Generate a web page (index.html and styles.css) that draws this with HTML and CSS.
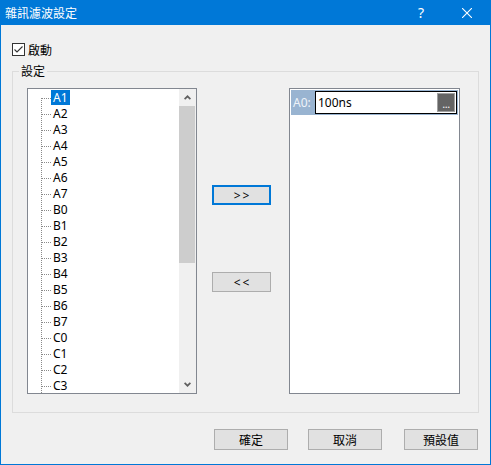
FILE: index.html
```html
<!DOCTYPE html>
<html lang="zh-Hant">
<head>
<meta charset="utf-8">
<title>雜訊濾波設定</title>
<link rel="stylesheet" href="styles.css">
</head>
<body>
<div class="window">
  <div class="titlebar">
    <span class="title">雜訊濾波設定</span>
    <span class="tb-btn help">?</span>
    <span class="tb-btn close"><svg width="10" height="10" viewBox="0 0 10 10"><path d="M0 0L10 10M10 0L0 10" stroke="#fff" stroke-width="1.1" fill="none"/></svg></span>
  </div>
  <div class="content">
    <div class="check-row">
      <span class="checkbox"><svg width="11" height="11" viewBox="0 0 11 11"><path d="M1.5 5.5L4 8L9.5 2.5" stroke="#333" stroke-width="1.1" fill="none"/></svg></span>
      <span class="check-label">啟動</span>
    </div>
    <fieldset class="group">
      <legend class="group-label">設定</legend>
      <div class="group-inner">
        <div class="tree">
          <div class="tree-items">
            <div class="row first"><span class="item selected">A1</span></div>
            <div class="row"><span class="item">A2</span></div>
            <div class="row"><span class="item">A3</span></div>
            <div class="row"><span class="item">A4</span></div>
            <div class="row"><span class="item">A5</span></div>
            <div class="row"><span class="item">A6</span></div>
            <div class="row"><span class="item">A7</span></div>
            <div class="row"><span class="item">B0</span></div>
            <div class="row"><span class="item">B1</span></div>
            <div class="row"><span class="item">B2</span></div>
            <div class="row"><span class="item">B3</span></div>
            <div class="row"><span class="item">B4</span></div>
            <div class="row"><span class="item">B5</span></div>
            <div class="row"><span class="item">B6</span></div>
            <div class="row"><span class="item">B7</span></div>
            <div class="row"><span class="item">C0</span></div>
            <div class="row"><span class="item">C1</span></div>
            <div class="row"><span class="item">C2</span></div>
            <div class="row"><span class="item">C3</span></div>
          </div>
          <div class="scrollbar">
            <div class="sb-btn"><svg width="7" height="5" viewBox="0 0 7 5"><path d="M0.6 4.2L3.5 1.3L6.4 4.2" stroke="#606060" stroke-width="1.7" fill="none"/></svg></div>
            <div class="sb-thumb"></div>
            <div class="sb-track"></div>
            <div class="sb-btn"><svg width="7" height="5" viewBox="0 0 7 5"><path d="M0.6 0.8L3.5 3.7L6.4 0.8" stroke="#606060" stroke-width="1.7" fill="none"/></svg></div>
          </div>
        </div>
        <div class="move-btns">
          <button class="btn move default">&gt;&gt;</button>
          <button class="btn move">&lt;&lt;</button>
        </div>
        <div class="panel">
          <div class="entry">
            <span class="entry-label">A0:</span>
            <div class="edit">
              <span class="edit-text">100ns</span>
              <span class="dots">...</span>
            </div>
          </div>
        </div>
      </div>
    </fieldset>
    <div class="footer">
      <button class="btn action">確定</button>
      <button class="btn action gap1">取消</button>
      <button class="btn action gap2">預設值</button>
    </div>
  </div>
</div>
</body>
</html>
```

FILE: styles.css
```css
* { box-sizing: border-box; }
html, body { margin: 0; padding: 0; }
body {
  font-family: "Noto Sans", "Noto Sans CJK TC", sans-serif;
  font-size: 12px;
  color: #000;
  background: #f0f0f0;
}
.window {
  width: 491px;
  height: 465px;
  border: 1px solid #0078d7;
  background: #f0f0f0;
  display: flex;
  flex-direction: column;
}
.titlebar {
  height: 24px;
  background: #0078d7;
  color: #fff;
  display: flex;
  align-items: center;
}
.title {
  flex: 1;
  padding-left: 4px;
  font-family: "Noto Sans CJK TC", sans-serif;
  font-size: 12px;
  line-height: 14px;
}
.tb-btn {
  width: 46px;
  height: 24px;
  display: flex;
  align-items: center;
  justify-content: center;
}
.help {
  font-family: "Noto Sans", sans-serif;
  font-size: 14px;
  padding-bottom: 1px;
}
.content {
  padding: 18px 11px 0 11px;
}
.check-row {
  display: flex;
  align-items: center;
  height: 13px;
}
.checkbox {
  width: 13px;
  height: 13px;
  border: 1px solid #333;
  background: #fff;
  display: flex;
}
.check-label {
  margin-left: 3px;
  font-family: "Noto Sans CJK TC", sans-serif;
  line-height: 13px;
}
.group {
  margin: 8px 0 0 0;
  padding: 0;
  border: 1px solid #dcdcdc;
  min-width: 0;
}
.group-label {
  margin-left: 6px;
  padding: 0 2px;
  font-family: "Noto Sans CJK TC", sans-serif;
  font-size: 12px;
  line-height: 14px;
}
.group-inner {
  display: flex;
  align-items: flex-start;
  padding: 10px 18px 18px 14px;
}
.tree {
  width: 170px;
  height: 306px;
  border: 1px solid #828790;
  background: #fff;
  display: flex;
}
.tree-items {
  flex: 1;
  overflow: hidden;
  padding-top: 1px;
}
.row {
  height: 16px;
  display: flex;
  align-items: flex-start;
  padding-left: 23px;
  background-image:
    repeating-linear-gradient(to bottom, #8a8a8a 0 1px, transparent 1px 2px),
    repeating-linear-gradient(to right, #8a8a8a 0 1px, transparent 1px 2px);
  background-repeat: no-repeat;
  background-position: 13px 0, 14px 8px;
  background-size: 1px 16px, 9px 1px;
}
.row.first {
  background-position: 13px 8px, 14px 8px;
  background-size: 1px 8px, 9px 1px;
}
.item {
  height: 15px;
  line-height: 16px;
  padding: 0 2px;
}
.item.selected {
  background: #0078d7;
  color: #fff;
}
.scrollbar {
  width: 17px;
  background: #f0f0f0;
  display: flex;
  flex-direction: column;
}
.sb-btn {
  height: 17px;
  display: flex;
  align-items: center;
  justify-content: center;
}
.sb-thumb {
  height: 157px;
  margin-right: 1px;
  background: #cdcdcd;
}
.sb-track { flex: 1; }
.move-btns {
  width: 59px;
  margin-left: 15px;
  padding-top: 97px;
  display: flex;
  flex-direction: column;
  gap: 67px;
}
.btn {
  font-family: "Noto Sans", "Noto Sans CJK TC", sans-serif;
  font-size: 12px;
  color: #000;
  background: #e1e1e1;
  border: 1px solid #adadad;
  padding: 0;
  margin: 0;
  display: flex;
  align-items: center;
  justify-content: center;
}
.btn.move {
  width: 59px;
  height: 20px;
  letter-spacing: 2px;
  padding-left: 2px;
}
.btn.default {
  border: 2px solid #0078d7;
}
.panel {
  width: 171px;
  height: 306px;
  margin-left: 18px;
  border: 1px solid #828790;
  background: #fff;
  padding: 1px;
}
.entry {
  height: 25px;
  background: #99b4d1;
  display: flex;
  align-items: center;
}
.entry-label {
  width: 24px;
  padding-left: 2px;
  color: #eef3f9;
  line-height: 15px;
}
.edit {
  width: 142px;
  height: 23px;
  border: 1px solid #000;
  background: #fff;
  display: flex;
  align-items: center;
  padding: 0 1px 0 2px;
}
.edit-text {
  flex: 1;
  line-height: 15px;
}
.dots {
  width: 18px;
  height: 19px;
  background: #646464;
  border: 1px solid #a0a0a0;
  color: #f4f4f4;
  font-size: 11px;
  line-height: 20px;
  text-align: center;
  letter-spacing: -0.5px;
}
.footer {
  display: flex;
  justify-content: flex-end;
  margin-top: 16px;
  padding-right: 1px;
}
.btn.action {
  width: 74px;
  height: 21px;
  font-family: "Noto Sans CJK TC", sans-serif;
}
.btn.gap1 { margin-left: 20px; }
.btn.gap2 { margin-left: 22px; }
```
